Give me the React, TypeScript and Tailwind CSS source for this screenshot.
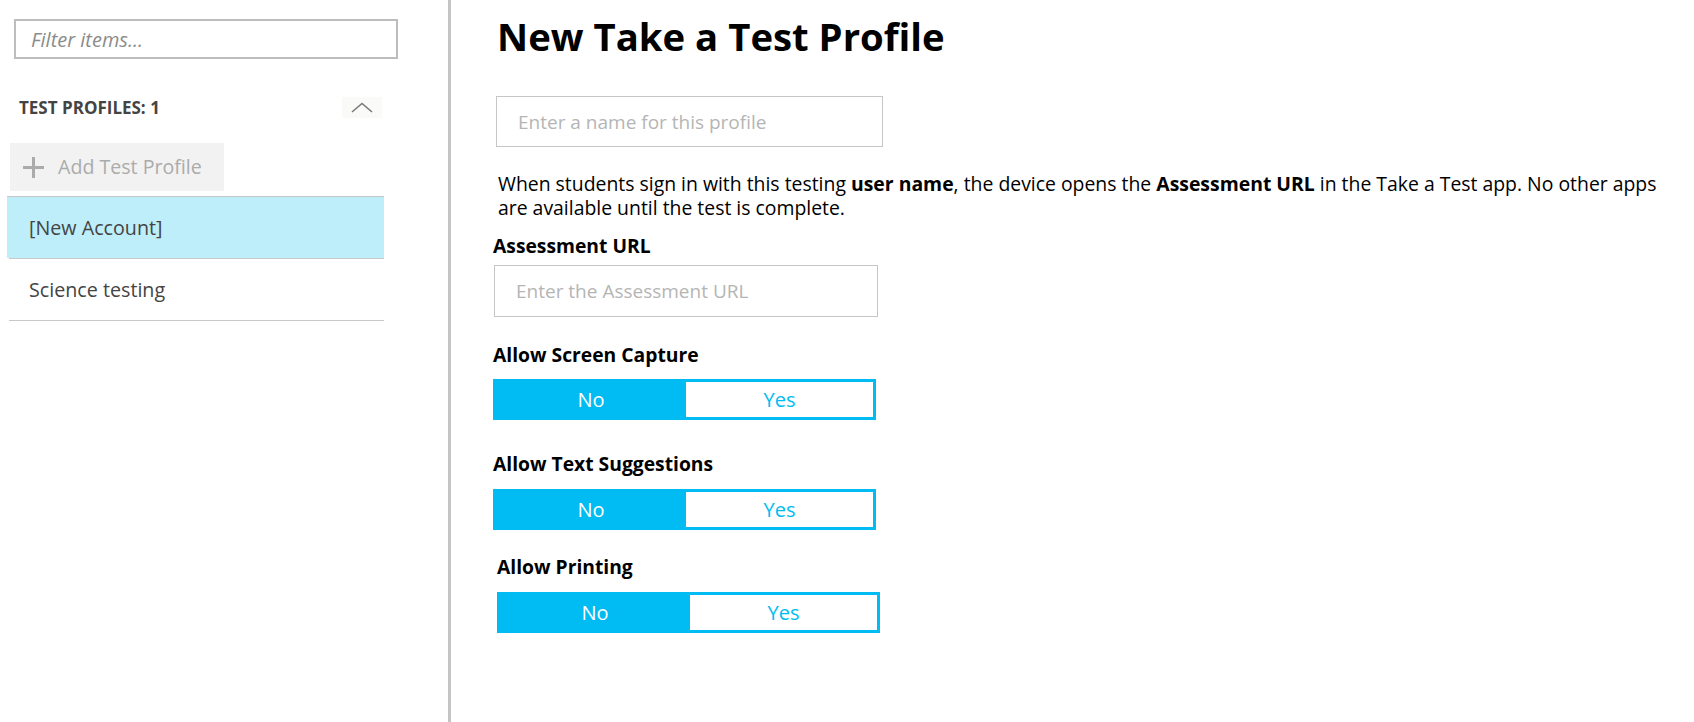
import React from "react";

function Toggle({ className = "" }: { className?: string }) {
  return (
    <div className={`flex h-[41px] w-[383px] border-[3px] border-[#00bcf2] ${className}`}>
      <div className="flex w-[190px] items-center justify-center bg-[#00bcf2] text-[20px] text-white">No</div>
      <div className="flex flex-1 items-center justify-center bg-white text-[20px] text-[#00bcf2]">Yes</div>
    </div>
  );
}

export default function App() {
  return (
    <div className="flex h-[722px] w-[1694px] overflow-hidden bg-white font-['Open_Sans',sans-serif]">
      {/* Sidebar */}
      <aside className="flex w-[451px] shrink-0 flex-col border-r-[3px] border-[#c4c4c4]">
        <input
          readOnly
          placeholder="Filter items..."
          className="ml-[14px] mt-[19px] h-[40px] w-[384px] border-2 border-[#bdbdbd] pl-[15px] text-[20px] outline-none placeholder:italic placeholder:text-[#8c8c8c]"
        />
        <div className="mt-[38px] flex h-[21px] items-center justify-between pl-[19px] pr-[66px]">
          <span className="text-[17px] font-bold leading-none text-[#444444]">TEST PROFILES: 1</span>
          <div className="flex h-[21px] w-[40px] items-center justify-center bg-[#fafaf8]">
            <svg width="22" height="11" viewBox="0 0 22 11" fill="none">
              <polyline points="1,10 11,1.5 21,10" stroke="#7a7a7a" strokeWidth="1.6" />
            </svg>
          </div>
        </div>
        <div className="ml-[10px] mt-[25px] flex h-[48px] w-[214px] items-center bg-[#f2f2f2] pl-[13px]">
          <svg width="21" height="21" viewBox="0 0 21 21">
            <line x1="10.5" y1="0" x2="10.5" y2="21" stroke="#ababab" strokeWidth="3" />
            <line x1="0" y1="10.5" x2="21" y2="10.5" stroke="#ababab" strokeWidth="3" />
          </svg>
          <span className="ml-[14px] text-[19.6px] text-[#ababab]">Add Test Profile</span>
        </div>
        <div className="ml-[7px] mt-[5px] w-[377px]">
          <div className="flex h-[62px] items-center border-t border-[#c8c8c8] bg-[#bdeefa] pl-[22px] text-[19.7px] text-[#444444]">
            [New Account]
          </div>
          <div className="ml-[2px] flex h-[63px] items-center border-y border-[#c8c8c8] pl-[20px] text-[19.7px] text-[#444444]">
            Science testing
          </div>
        </div>
      </aside>

      {/* Main */}
      <main className="flex flex-1 flex-col text-black">
        <h1 className="ml-[46px] mt-[17px] text-[38.3px] font-bold leading-[38px]">New Take a Test Profile</h1>
        <input
          readOnly
          placeholder="Enter a name for this profile"
          className="ml-[45px] mt-[41px] h-[51px] w-[387px] border border-[#c6c6c6] pl-[21px] text-[19px] outline-none placeholder:text-[#b5b5b5]"
        />
        <p className="ml-[47px] mt-[25px] text-[19.4px] leading-[24px]">
          When students sign in with this testing <b>user name</b>, the device opens the <b>Assessment URL</b> in the Take a Test app. No other apps
          <br />
          are available until the test is complete.
        </p>
        <div className="ml-[42px] mt-[15px] text-[19.3px] font-bold leading-[22px]">Assessment URL</div>
        <input
          readOnly
          placeholder="Enter the Assessment URL"
          className="ml-[43px] mt-[8px] h-[52px] w-[384px] border border-[#c6c6c6] pl-[21px] text-[19px] outline-none placeholder:text-[#b5b5b5]"
        />
        <div className="ml-[42px] mt-[27px] text-[19.3px] font-bold leading-[22px]">Allow Screen Capture</div>
        <Toggle className="ml-[42px] mt-[13px]" />
        <div className="ml-[42px] mt-[33px] text-[19.3px] font-bold leading-[22px]">Allow Text Suggestions</div>
        <Toggle className="ml-[42px] mt-[14px]" />
        <div className="ml-[46px] mt-[26px] text-[19.3px] font-bold leading-[22px]">Allow Printing</div>
        <Toggle className="ml-[46px] mt-[14px]" />
      </main>
    </div>
  );
}
